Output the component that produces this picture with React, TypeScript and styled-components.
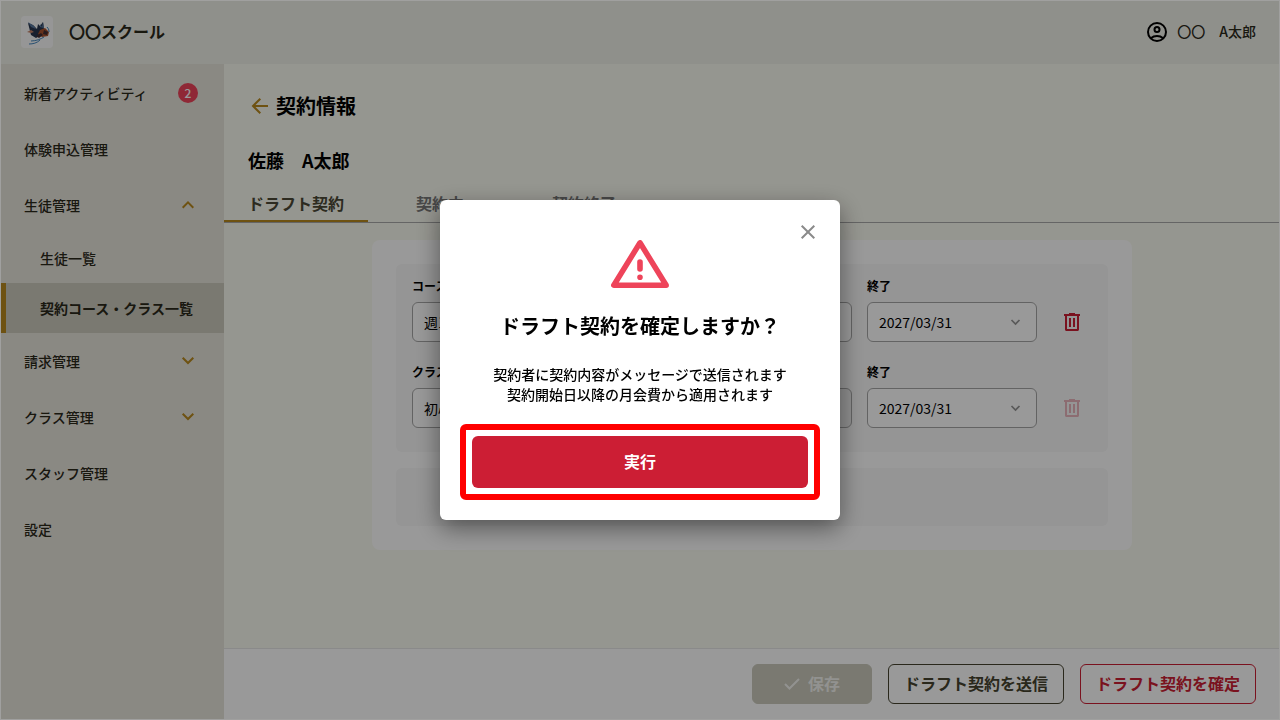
import React from "react";
import styled, { createGlobalStyle } from "styled-components";

const gold = "#b8891e";
const red = "#cc1e34";
const alertRed = "#ee445a";
const ink = "#2a281a";

const GlobalStyle = createGlobalStyle`
  *, *::before, *::after { box-sizing: border-box; }
  body {
    margin: 0;
    font-family: "Noto Sans CJK JP", "Noto Sans", sans-serif;
    font-size: 14px;
    line-height: 20px;
    color: #000;
  }
  button, select { font: inherit; color: inherit; }
  h1, h2, p, ul { margin: 0; padding: 0; }
  ul { list-style: none; }
  svg { display: block; flex: none; }
`;

const Page = styled.div`
  position: relative;
  display: flex;
  flex-direction: column;
  min-height: 100vh;
  background: #f9faf0;

  &::after {
    content: "";
    position: absolute;
    inset: 0;
    z-index: 20;
    border: 1px solid #a0a09f;
    pointer-events: none;
  }
`;

const Header = styled.header`
  display: flex;
  align-items: center;
  justify-content: space-between;
  height: 64px;
  padding: 0 24px 0 21px;
  background: #eff0e8;
`;

const Brand = styled.div`
  display: flex;
  align-items: center;
  gap: 16px;
  color: ${ink};
  font-size: 16px;
  font-weight: 700;
`;

const HeaderText = styled.span`
  padding-bottom: 2px;
`;

const LogoBox = styled.span`
  display: flex;
  width: 32px;
  height: 32px;
  border-radius: 4px;
  background: #fbfbfb;
`;

const User = styled.div`
  display: flex;
  align-items: center;
  gap: 10px;
  color: ${ink};
  font-weight: 500;
`;

const Body = styled.div`
  display: flex;
  flex: 1;
`;

const Sidebar = styled.nav`
  flex: none;
  width: 224px;
  padding-top: 1px;
  background: #e7e4da;
`;

const NavLink = styled.a`
  display: flex;
  align-items: center;
  justify-content: space-between;
  height: 56px;
  padding: 0 26px 0 24px;
  color: ${ink};
  font-weight: 500;
  text-decoration: none;
`;

const NavToggle = styled(NavLink).attrs({ as: "button", type: "button" })`
  width: 100%;
  border: 0;
  background: none;
`;

const SubLink = styled(NavLink)<{ $active?: boolean }>`
  height: 50px;
  padding-left: ${(p) => (p.$active ? "34px" : "40px")};
  border-left: ${(p) => (p.$active ? `6px solid ${gold}` : "0")};
  background: ${(p) => (p.$active ? "#cbcabc" : "none")};
  font-weight: ${(p) => (p.$active ? 700 : 500)};
`;

const Badge = styled.span`
  width: 20px;
  height: 20px;
  border-radius: 50%;
  background: ${alertRed};
  color: #fff;
  font-size: 12px;
  text-align: center;
`;

const Main = styled.main`
  display: flex;
  flex: 1;
  flex-direction: column;
  min-width: 0;
`;

const TitleRow = styled.div`
  display: flex;
  align-items: center;
  gap: 4px;
  padding: 28px 24px 0;
`;

const BackButton = styled.button`
  display: flex;
  padding: 0;
  border: 0;
  background: none;
  color: ${gold};
`;

const PageTitle = styled.h1`
  font-size: 20px;
  line-height: 28px;
  font-weight: 700;
`;

const StudentName = styled.h2`
  padding: 27px 24px 0;
  font-size: 18px;
  line-height: 26px;
  font-weight: 700;
`;

const Tabs = styled.div`
  display: flex;
  margin-top: 15px;
  border-bottom: 1px solid #a8a8a8;
`;

const Tab = styled.button<{ $active?: boolean }>`
  width: 144px;
  height: 34px;
  padding: 0 0 2px;
  border: 0;
  border-bottom: 2px solid ${(p) => (p.$active ? gold : "transparent")};
  background: none;
  color: ${(p) => (p.$active ? "#4b4936" : "#777")};
  font-size: 16px;
  font-weight: 700;
`;

const Content = styled.div`
  flex: 1;
  padding: 17px 24px 24px;
`;

const Card = styled.section`
  display: flex;
  flex-direction: column;
  gap: 16px;
  max-width: 760px;
  margin: 0 auto;
  padding: 24px;
  border-radius: 8px;
  background: #fff;
`;

const Panel = styled.div`
  display: flex;
  flex-direction: column;
  gap: 20px;
  min-height: 58px;
  padding: 12px 16px 24px;
  border-radius: 6px;
  background: #f8f8f8;
`;

const FieldRow = styled.div`
  display: grid;
  grid-template-columns: 1fr 170px 170px 40px;
  column-gap: 15px;
  align-items: end;
`;

const Field = styled.label`
  display: flex;
  flex-direction: column;
  gap: 6px;
  font-size: 12px;
  font-weight: 700;
`;

const SelectWrap = styled.span`
  display: grid;
  align-items: center;
  font-size: 14px;
  font-weight: 400;

  & > * { grid-area: 1 / 1; }
  & > svg { justify-self: end; margin-right: 16px; pointer-events: none; }
`;

const Select = styled.select`
  width: 100%;
  height: 40px;
  padding: 0 11px;
  border: 1px solid #a6a6a6;
  border-radius: 6px;
  appearance: none;
  background: #fff;
  color: #000;
  opacity: 1;

  &:disabled { background: #eee; }
`;

const DeleteButton = styled.button`
  display: flex;
  justify-content: center;
  align-items: center;
  height: 40px;
  padding: 0;
  border: 0;
  background: none;
  color: ${red};

  &:disabled { opacity: 0.3; }
`;

const Footer = styled.footer`
  display: flex;
  justify-content: flex-end;
  gap: 16px;
  padding: 15px 24px 16px;
  border-top: 1px solid #e6e6e6;
  background: #fff;
`;

const ActionButton = styled.button<{ $tone: "muted" | "dark" | "red" }>`
  display: flex;
  align-items: center;
  justify-content: center;
  gap: 8px;
  min-width: 120px;
  height: 40px;
  padding: 0 15px 2px;
  border: 1px solid
    ${(p) => (p.$tone === "muted" ? "#cbcabc" : p.$tone === "dark" ? "#464430" : red)};
  border-radius: 6px;
  background: ${(p) => (p.$tone === "muted" ? "#cbcabc" : "#fff")};
  color: ${(p) => (p.$tone === "muted" ? "#f4f4f0" : p.$tone === "dark" ? "#464430" : red)};
  font-size: 16px;
  font-weight: 700;
`;

const Backdrop = styled.div`
  position: fixed;
  inset: 0;
  z-index: 10;
  display: flex;
  align-items: center;
  justify-content: center;
  background: rgba(0, 0, 0, 0.4);
`;

const Dialog = styled.section`
  position: relative;
  display: flex;
  flex-direction: column;
  align-items: center;
  width: 400px;
  max-width: 100%;
  padding: 40px 32px 32px;
  border-radius: 6px;
  background: #fff;
  box-shadow: 0 8px 24px rgba(0, 0, 0, 0.45);
  text-align: center;
`;

const CloseButton = styled.button`
  position: absolute;
  top: 20px;
  right: 20px;
  display: flex;
  padding: 0;
  border: 0;
  background: none;
  color: #8a8a8a;
`;

const DialogTitle = styled.h2`
  margin-top: 24px;
  font-size: 20px;
  line-height: 28px;
  font-weight: 700;
`;

const DialogText = styled.p`
  margin-top: 24px;
  font-weight: 500;
`;

const RunButton = styled.button`
  position: relative;
  width: 100%;
  height: 52px;
  margin-top: 32px;
  padding: 0 0 2px;
  border: 0;
  border-radius: 6px;
  background: ${red};
  color: #fff;
  font-size: 16px;
  font-weight: 700;

  &::after {
    content: "";
    position: absolute;
    inset: -12px;
    border: 6px solid #f00;
    border-radius: 6px;
  }
`;

function Logo() {
  return (
    <svg width="32" height="32" viewBox="0 0 32 32" aria-hidden="true">
      <path d="M7 7l5 2 4 4 1-5 2 2 3-4 1 7-1 5-7 4-5-3z" fill="#28364f" />
      <path d="M7 6l6 4 2 3-5-2zM19 8l2 3 1-5 1 6-4-1z" fill="#56759c" />
      <path d="M19 14l5-2 4 4-1 4-6 1-4-3z" fill="#a9532e" />
      <path d="M23 14l4 2-1 3-4-1zM15 20l5-3 2 2-4 3z" fill="#442d31" />
      <path d="M6 16l4-2 3 2-3 1z" fill="#c5846a" />
      <path d="M26 11c2 2 2 4 2 5M10 25c5 0 10-2 13-4M8 28c4 0 8-1 11-4" fill="none" stroke="#4285bd" />
    </svg>
  );
}

function Chevron({ up, small }: { up?: boolean; small?: boolean }) {
  return (
    <svg
      width={small ? 12 : 20}
      height={small ? 12 : 20}
      viewBox={small ? "0 0 12 12" : "0 0 20 20"}
      fill="none"
      stroke={small ? "#949494" : gold}
      strokeWidth={small ? 1.7 : 2}
      aria-hidden="true"
    >
      <path d={small ? "M2.500 4l4 4 4-4" : up ? "M4.700 12.700L10 7.400l5.300 5.300" : "M4.700 6.700L10 12l5.300-5.300"} />
    </svg>
  );
}

function Trash() {
  return (
    <svg width="16" height="18" viewBox="0 0 16 18" fill="currentColor" aria-hidden="true">
      <path d="M5 0h6v1h5v2h-1v13.500c0 .8-.7 1.500-1.500 1.500h-11C1.700 18 1 17.300 1 16.500V3H0V1h5zM3 3v13h10V3zM5 5h2v9H5zM9 5h2v9H9z" fillRule="evenodd" />
    </svg>
  );
}

function SelectField({ label, value, disabled }: { label: string; value: string; disabled?: boolean }) {
  return (
    <Field>
      {label}
      <SelectWrap>
        <Select defaultValue={value} disabled={disabled}>
          <option>{value}</option>
        </Select>
        <Chevron small />
      </SelectWrap>
    </Field>
  );
}

export default function App() {
  return (
    <>
      <GlobalStyle />
      <Page>
        <Header>
          <Brand>
            <LogoBox><Logo /></LogoBox>
            <HeaderText>〇〇スクール</HeaderText>
          </Brand>
          <User>
            <svg width="20" height="20" viewBox="0 0 20 20" fill="none" stroke="#000" strokeWidth="2" aria-hidden="true">
              <circle cx="10" cy="10" r="9" />
              <circle cx="10" cy="7.500" r="2.500" />
              <path d="M3.800 16.200c1.800-1.500 4-2.200 6.200-2.200s4.400.7 6.200 2.200" />
            </svg>
            <HeaderText>〇〇　A太郎</HeaderText>
          </User>
        </Header>
        <Body>
          <Sidebar>
            <ul>
              <li><NavLink href="#activity">新着アクティビティ<Badge>2</Badge></NavLink></li>
              <li><NavLink href="#trial">体験申込管理</NavLink></li>
              <li>
                <NavToggle aria-expanded="true">生徒管理<Chevron up /></NavToggle>
                <ul>
                  <li><SubLink href="#students">生徒一覧</SubLink></li>
                  <li><SubLink href="#contracts" $active aria-current="page">契約コース・クラス一覧</SubLink></li>
                </ul>
              </li>
              <li><NavToggle aria-expanded="false">請求管理<Chevron /></NavToggle></li>
              <li><NavToggle aria-expanded="false">クラス管理<Chevron /></NavToggle></li>
              <li><NavLink href="#staff">スタッフ管理</NavLink></li>
              <li><NavLink href="#settings">設定</NavLink></li>
            </ul>
          </Sidebar>
          <Main>
            <TitleRow>
              <BackButton type="button" aria-label="戻る">
                <svg width="24" height="24" viewBox="0 0 24 24" fill="none" stroke="currentColor" strokeWidth="2" aria-hidden="true">
                  <path d="M20 12H6M12.300 4.700L5 12l7.300 7.300" />
                </svg>
              </BackButton>
              <PageTitle>契約情報</PageTitle>
            </TitleRow>
            <StudentName>佐藤　A太郎</StudentName>
            <Tabs role="tablist">
              <Tab type="button" role="tab" aria-selected="true" $active>ドラフト契約</Tab>
              <Tab type="button" role="tab" aria-selected="false">契約中</Tab>
              <Tab type="button" role="tab" aria-selected="false">契約終了</Tab>
            </Tabs>
            <Content>
              <Card>
                <Panel>
                  <FieldRow>
                    <SelectField label="コース" value="週1回コース" />
                    <SelectField label="開始" value="2026/04/01" />
                    <SelectField label="終了" value="2027/03/31" />
                    <DeleteButton type="button" aria-label="削除"><Trash /></DeleteButton>
                  </FieldRow>
                  <FieldRow>
                    <SelectField label="クラス" value="初心者クラス" />
                    <SelectField label="開始" value="2026/04/01" disabled />
                    <SelectField label="終了" value="2027/03/31" />
                    <DeleteButton type="button" aria-label="削除" disabled><Trash /></DeleteButton>
                  </FieldRow>
                </Panel>
                <Panel />
              </Card>
            </Content>
            <Footer>
              <ActionButton type="button" $tone="muted" disabled>
                <svg width="16" height="16" viewBox="0 0 16 16" fill="none" stroke="currentColor" strokeWidth="2" aria-hidden="true">
                  <path d="M1 9L5.500 13.500 15 4" />
                </svg>
                保存
              </ActionButton>
              <ActionButton type="button" $tone="dark">ドラフト契約を送信</ActionButton>
              <ActionButton type="button" $tone="red">ドラフト契約を確定</ActionButton>
            </Footer>
          </Main>
        </Body>
        <Backdrop>
          <Dialog role="dialog" aria-modal="true" aria-labelledby="dialog-title">
            <CloseButton type="button" aria-label="閉じる">
              <svg width="24" height="24" viewBox="0 0 24 24" fill="none" stroke="currentColor" strokeWidth="2" aria-hidden="true">
                <path d="M5.700 5.700l12.600 12.600M18.300 5.700L5.700 18.300" />
              </svg>
            </CloseButton>
            <svg width="58" height="48" viewBox="0 0 58 48" fill="none" stroke={alertRed} strokeWidth="5.500" strokeLinejoin="round" aria-hidden="true">
              <path d="M29 2.800L2.800 45.200h52.400z" />
              <path d="M29 22v7M29 37.300v.01" strokeLinecap="round" strokeWidth="5.600" />
            </svg>
            <DialogTitle id="dialog-title">ドラフト契約を確定しますか？</DialogTitle>
            <DialogText>
              契約者に契約内容がメッセージで送信されます
              <br />
              契約開始日以降の月会費から適用されます
            </DialogText>
            <RunButton type="button">実行</RunButton>
          </Dialog>
        </Backdrop>
      </Page>
    </>
  );
}
